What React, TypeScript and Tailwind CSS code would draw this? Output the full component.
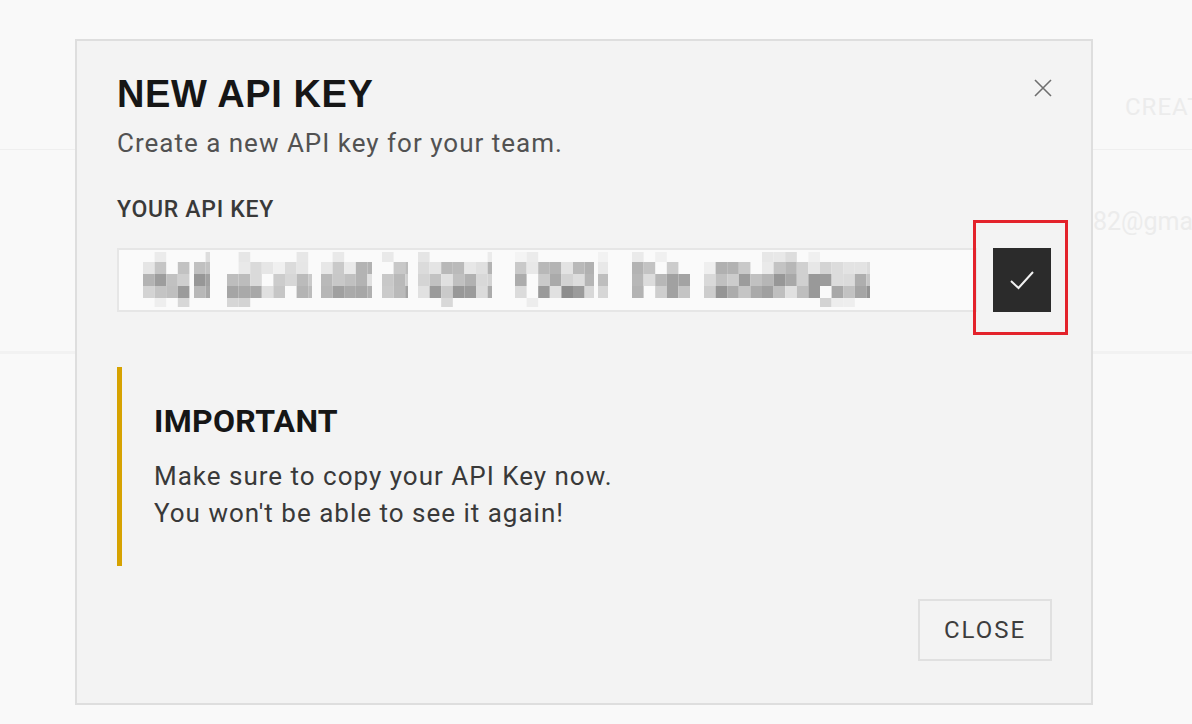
import React from "react";

function rng(seed: number) {
  let s = seed;
  return () => {
    s = (s * 1103515245 + 12345) & 0x7fffffff;
    return s / 0x7fffffff;
  };
}

const groups: [number, number][] = [
  [141, 188],
  [192, 208],
  [225, 310],
  [319, 370],
  [380, 406],
  [416, 490],
  [513, 592],
  [596, 606],
  [630, 690],
  [702, 868],
];

function Mosaic() {
  const r = rng(11);
  const cell = 11.6;
  const rects: JSX.Element[] = [];
  const rows = [
    { y: 3, h: 10, p: 0.3, lo: 220, hi: 245 },
    { y: 13, h: 12, p: 0.85, lo: 175, hi: 240 },
    { y: 25, h: 12, p: 0.97, lo: 150, hi: 225 },
    { y: 37, h: 12, p: 0.95, lo: 140, hi: 228 },
    { y: 49, h: 9, p: 0.2, lo: 210, hi: 240 },
  ];
  let k = 0;
  groups.forEach(([a, b]) => {
    for (let x = a; x < b - 2; x += cell) {
      rows.forEach((row) => {
        if (r() < row.p) {
          const g = Math.round(row.lo + r() * (row.hi - row.lo));
          rects.push(
            <rect
              key={k++}
              x={x - 117}
              y={row.y}
              width={Math.min(cell, b - x)}
              height={row.h}
              fill={`rgb(${g},${g},${g})`}
            />
          );
        }
      });
    }
  });
  return (
    <svg width="760" height="62" className="block" style={{ filter: "blur(0.6px)" }}>
      {rects}
    </svg>
  );
}

export default function App() {
  const plex = { fontFamily: "Roboto, 'Noto Sans', sans-serif" };
  return (
    <div
      className="relative w-[1192px] h-[724px] overflow-hidden bg-[#f9f9f9]"
      style={plex}
    >
      {/* background page */}
      <div className="flex flex-col">
        <div className="h-[150px] border-b border-[#efefef] flex pt-[92px] pl-[1125px]">
          <span className="text-[24px] leading-[30px] tracking-[1px] text-[#ececec] whitespace-nowrap">
            CREAT
          </span>
        </div>
        <div className="h-[204px] border-b-[3px] border-[#f2f2f2] flex pt-[57px] pl-[1093px]">
          <span className="text-[25px] leading-[30px] text-[#ececec] whitespace-nowrap">
            82@gma
          </span>
        </div>
      </div>

      {/* modal */}
      <div className="absolute left-[75px] top-[39px] w-[1018px] h-[666px] border-2 border-[#dedede] bg-[#f3f3f3] flex flex-col pl-[40px] pr-[39px] pt-[34px]">
        <div className="flex justify-between items-start">
          <h1
            className="text-[38px] leading-[38px] font-bold text-[#161616] tracking-[0.6px]"
            style={{ fontFamily: "'Liberation Sans', Arial, sans-serif" }}
          >
            NEW API KEY
          </h1>
          <button className="mt-[2px] -mr-[2px] w-[22px] h-[22px] flex items-center justify-center">
            <svg width="20" height="20" viewBox="0 0 20 20">
              <path d="M2 2 L18 18 M18 2 L2 18" stroke="#6f6f6f" strokeWidth="1.6" />
            </svg>
          </button>
        </div>
        <p className="mt-[14px] text-[26px] leading-[32px] tracking-[1px] text-[#525252]">
          Create a new API key for your team.
        </p>
        <label className="mt-[37px] text-[23px] leading-[28px] tracking-[0.7px] font-medium text-[#393939]">
          YOUR API KEY
        </label>
        <div className="mt-[24px] flex items-center">
          <div className="w-[860px] h-[64px] border-2 border-[#e6e6e6] bg-[#fafafa] flex items-center overflow-hidden">
            <Mosaic />
          </div>
          <div className="relative ml-[16px]">
            <button className="w-[58px] h-[64px] bg-[#2b2b2b] flex items-center justify-center">
              <svg width="26" height="20" viewBox="0 0 26 20">
                <path
                  d="M2 11 L9.5 18 L24 2"
                  fill="none"
                  stroke="#f2f2f2"
                  strokeWidth="2"
                />
              </svg>
            </button>
            <div className="absolute -left-[20px] -top-[28px] w-[95px] h-[115px] border-[3px] border-[#e3222b] pointer-events-none" />
          </div>
        </div>

        <div className="mt-[55px] h-[199px] flex">
          <div className="w-[5px] bg-[#d6a200]" />
          <div className="pl-[32px] pt-[34px] flex flex-col">
            <h2 className="text-[32px] leading-[40px] font-bold tracking-[0.3px] text-[#161616]">IMPORTANT</h2>
            <p className="mt-[17px] text-[26px] leading-[37px] tracking-[1px] text-[#393939]">
              Make sure to copy your API Key now.
              <br />
              You won't be able to see it again!
            </p>
          </div>
        </div>

        <div className="mt-[33px] flex justify-end">
          <button className="w-[134px] h-[62px] border-2 border-[#e0e0e0] bg-[#f3f3f3] text-[24px] tracking-[2px] text-[#3d3d3d] flex items-center justify-center">
            CLOSE
          </button>
        </div>
      </div>
    </div>
  );
}
